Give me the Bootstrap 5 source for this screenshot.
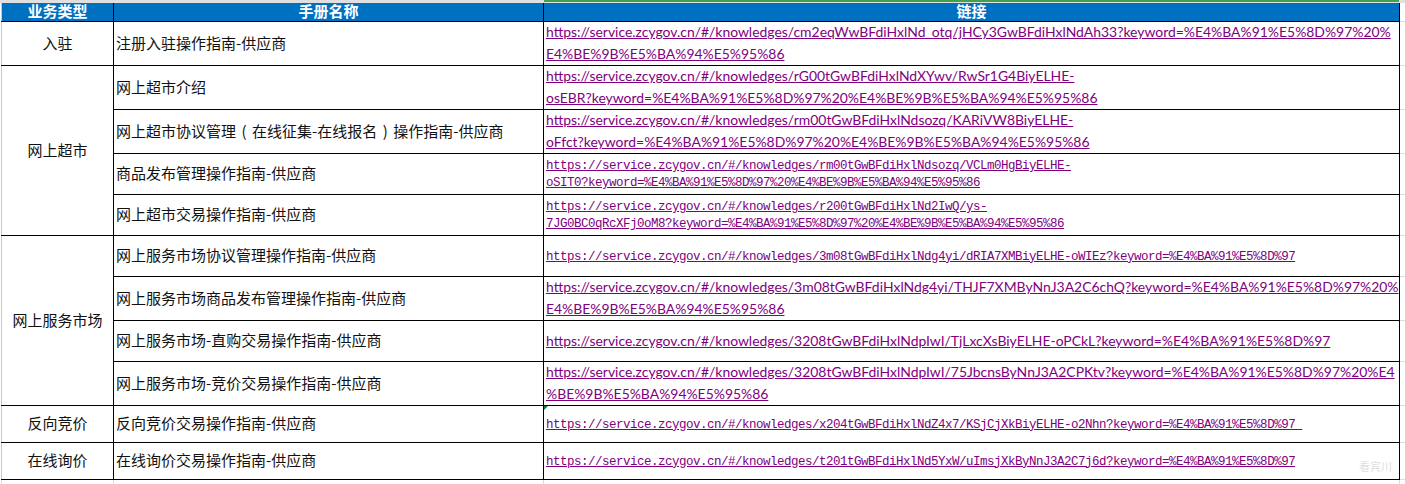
<!DOCTYPE html>
<html lang="zh-CN">
<head>
<meta charset="utf-8">
<title>操作指南</title>
<link rel="stylesheet" href="https://cdn.jsdelivr.net/npm/bootstrap@5.3.0/dist/css/bootstrap.min.css">
<style>
html, body { margin: 0; background: #fff; overflow: hidden; }
.sheet-topbar { height: 3px; background: #e0e0e0; }
.sheet-wrap { padding-left: 1px; }
.sheet-grid { table-layout: fixed; border-collapse: collapse; width: 1404px; margin: 0; --bs-table-bg: transparent; color: #111; font-family: "Noto Sans CJK SC", "Liberation Sans", sans-serif; font-size: 15px; }
.sheet-grid > :not(caption) > * > * { padding: 0 2px 2px; border: 1px solid #000; box-shadow: none; vertical-align: middle; background: transparent; line-height: 16px; }
.sheet-grid > :not(caption) > * > .cell-link { padding: 0 2px; }
.sheet-grid > :not(caption) > * > .cell-gutter { padding: 0; border: 0; border-bottom: 1px solid #dcdcdc; }
.sheet-grid > :not(caption) > * > .cell-type { border-left-color: #c8c8c8; text-align: center; }
.sheet-grid > thead > tr > th:first-child { border-left-color: #c8c8c8; }
.cw-a { width: 112px; } .cw-b { width: 430px; } .cw-c { width: 856px; } .cw-d { width: 6px; }
.sheet-grid > thead > tr > th { background: #0070c0; color: #fff; font-weight: 700; text-align: center; border-top: 0; }
.sheet-grid > thead > tr > .cell-gutter { background: transparent; }
.rh-18 { height: 18px; } .rh-44 { height: 44px; } .rh-41 { height: 41px; } .rh-37 { height: 37px; }
.sheet-grid > tbody > .row-tail > td { height: 5px; padding: 0; border-top: 0; border-bottom: 0; border-left-color: #dcdcdc; border-right-color: #dcdcdc; line-height: 0; }
.url-sans, .url-mono { color: #800080; text-decoration: underline; white-space: nowrap; display: block; }
.url-sans { font-family: Lato, "Liberation Sans", sans-serif; font-size: 13.93px; line-height: 22px; margin-top: -1px; }
.url-mono { font-family: "Liberation Mono", monospace; font-size: 12.5px; line-height: 17px; letter-spacing: -.5px; padding-top: 2px; }
.paren-mid { display: inline-block; width: 16px; text-align: center; }
.has-flag { position: relative; }
.green-flag { position: absolute; left: 0; top: 0; border-top: 4px solid #107c41; border-right: 4px solid transparent; }
.col-accent { position: absolute; left: 544px; width: 855px; top: 0; height: 2px; background: #3fa34d; }
.page-mark { position: absolute; left: 1359px; top: 458px; color: #e0e0e0; font-family: "Noto Sans CJK SC", sans-serif; font-size: 11px; }
</style>
</head>
<body>
<div class="col-accent"></div>
<div class="sheet-topbar"></div>
<div class="sheet-wrap">
<table class="table sheet-grid">
<colgroup><col class="cw-a"><col class="cw-b"><col class="cw-c"><col class="cw-d"></colgroup>
<thead>
<tr class="rh-18"><th>业务类型</th><th>手册名称</th><th>链接</th><td class="cell-gutter"></td></tr>
</thead>
<tbody>
<tr class="rh-44"><td class="cell-type">入驻</td><td>注册入驻操作指南-供应商</td><td class="cell-link"><a class="url-sans" href="#">https://service.zcygov.cn/#/knowledges/cm2eqWwBFdiHxlNd_otq/jHCy3GwBFdiHxlNdAh33?keyword=%E4%BA%91%E5%8D%97%20%<br>E4%BE%9B%E5%BA%94%E5%95%86</a></td><td class="cell-gutter"></td></tr>
<tr class="rh-44"><td class="cell-type" rowspan="4">网上超市</td><td>网上超市介绍</td><td class="cell-link"><a class="url-sans" href="#">https://service.zcygov.cn/#/knowledges/rG00tGwBFdiHxlNdXYwv/RwSr1G4BiyELHE-<br>osEBR?keyword=%E4%BA%91%E5%8D%97%20%E4%BE%9B%E5%BA%94%E5%95%86</a></td><td class="cell-gutter"></td></tr>
<tr class="rh-44"><td>网上超市协议管理<span class="paren-mid">(</span>在线征集-在线报名<span class="paren-mid">)</span>操作指南-供应商</td><td class="cell-link"><a class="url-sans" href="#">https://service.zcygov.cn/#/knowledges/rm00tGwBFdiHxlNdsozq/KARiVW8BiyELHE-<br>oFfct?keyword=%E4%BA%91%E5%8D%97%20%E4%BE%9B%E5%BA%94%E5%95%86</a></td><td class="cell-gutter"></td></tr>
<tr class="rh-41"><td>商品发布管理操作指南-供应商</td><td class="cell-link"><a class="url-mono" href="#">https://service.zcygov.cn/#/knowledges/rm00tGwBFdiHxlNdsozq/VCLm0HgBiyELHE-<br>oSIT0?keyword=%E4%BA%91%E5%8D%97%20%E4%BE%9B%E5%BA%94%E5%95%86</a></td><td class="cell-gutter"></td></tr>
<tr class="rh-41"><td>网上超市交易操作指南-供应商</td><td class="cell-link"><a class="url-mono" href="#">https://service.zcygov.cn/#/knowledges/r200tGwBFdiHxlNd2IwQ/ys-<br>7JG0BC0qRcXFj0oM8?keyword=%E4%BA%91%E5%8D%97%20%E4%BE%9B%E5%BA%94%E5%95%86</a></td><td class="cell-gutter"></td></tr>
<tr class="rh-41"><td class="cell-type" rowspan="4">网上服务市场</td><td>网上服务市场协议管理操作指南-供应商</td><td class="cell-link"><a class="url-mono" href="#">https://service.zcygov.cn/#/knowledges/3m08tGwBFdiHxlNdg4yi/dRIA7XMBiyELHE-oWIEz?keyword=%E4%BA%91%E5%8D%97</a></td><td class="cell-gutter"></td></tr>
<tr class="rh-44"><td>网上服务市场商品发布管理操作指南-供应商</td><td class="cell-link"><a class="url-sans" href="#">https://service.zcygov.cn/#/knowledges/3m08tGwBFdiHxlNdg4yi/THJF7XMByNnJ3A2C6chQ?keyword=%E4%BA%91%E5%8D%97%20%<br>E4%BE%9B%E5%BA%94%E5%95%86</a></td><td class="cell-gutter"></td></tr>
<tr class="rh-41"><td>网上服务市场-直购交易操作指南-供应商</td><td class="cell-link"><a class="url-sans" href="#">https://service.zcygov.cn/#/knowledges/3208tGwBFdiHxlNdpIwI/TjLxcXsBiyELHE-oPCkL?keyword=%E4%BA%91%E5%8D%97</a></td><td class="cell-gutter"></td></tr>
<tr class="rh-44"><td>网上服务市场-竞价交易操作指南-供应商</td><td class="cell-link"><a class="url-sans" href="#">https://service.zcygov.cn/#/knowledges/3208tGwBFdiHxlNdpIwI/75JbcnsByNnJ3A2CPKtv?keyword=%E4%BA%91%E5%8D%97%20%E4<br>%BE%9B%E5%BA%94%E5%95%86</a></td><td class="cell-gutter"></td></tr>
<tr class="rh-37"><td class="cell-type">反向竞价</td><td>反向竞价交易操作指南-供应商</td><td class="cell-link has-flag"><span class="green-flag"></span><a class="url-mono" href="#">https://service.zcygov.cn/#/knowledges/x204tGwBFdiHxlNdZ4x7/KSjCjXkBiyELHE-o2Nhn?keyword=%E4%BA%91%E5%8D%97&nbsp;</a></td><td class="cell-gutter"></td></tr>
<tr class="rh-37"><td class="cell-type">在线询价</td><td>在线询价交易操作指南-供应商</td><td class="cell-link"><a class="url-mono" href="#">https://service.zcygov.cn/#/knowledges/t201tGwBFdiHxlNd5YxW/uImsjXkByNnJ3A2C7j6d?keyword=%E4%BA%91%E5%8D%97</a></td><td class="cell-gutter"></td></tr>
<tr class="row-tail"><td></td><td></td><td></td><td></td></tr>
</tbody>
</table>
</div>
<div class="page-mark">看宾川</div>
<script src="https://cdn.jsdelivr.net/npm/bootstrap@5.3.0/dist/js/bootstrap.bundle.min.js"></script>
</body>
</html>
